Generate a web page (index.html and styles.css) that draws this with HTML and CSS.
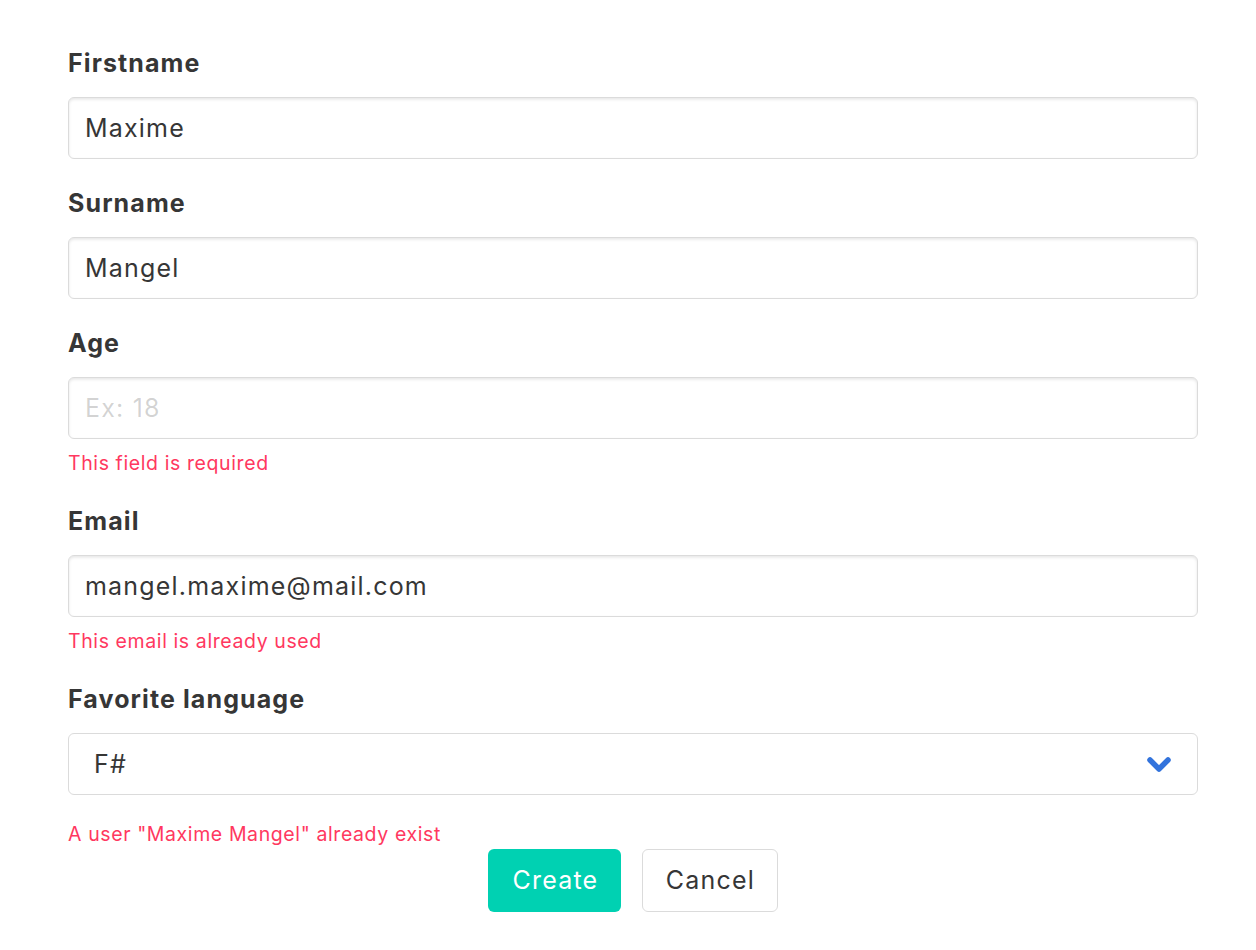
FILE: index.html
```html
<!DOCTYPE html>
<html lang="en">
<head>
<meta charset="utf-8">
<title>User form</title>
<link rel="stylesheet" href="styles.css">
</head>
<body>
<form class="form">
  <div class="field">
    <label class="label">Firstname</label>
    <div class="control"><input class="input" type="text" value="Maxime"></div>
  </div>
  <div class="field">
    <label class="label">Surname</label>
    <div class="control"><input class="input" type="text" value="Mangel"></div>
  </div>
  <div class="field">
    <label class="label">Age</label>
    <div class="control"><input class="input" type="text" placeholder="Ex: 18"></div>
    <p class="help">This field is required</p>
  </div>
  <div class="field">
    <label class="label">Email</label>
    <div class="control"><input class="input" type="text" value="mangel.maxime@mail.com"></div>
    <p class="help">This email is already used</p>
  </div>
  <div class="field field-last">
    <label class="label">Favorite language</label>
    <div class="control">
      <div class="select">
        <span class="select-value">F#</span>
        <svg class="arrow" width="26" height="18" viewBox="0 0 26 18"><polyline points="3,4 12,13 21,4" fill="none" stroke="#3273dc" stroke-width="5.5" stroke-linecap="round" stroke-linejoin="round"/></svg>
      </div>
    </div>
    <p class="help help-last">A user "Maxime Mangel" already exist</p>
  </div>
  <div class="buttons">
    <button type="button" class="button primary">Create</button>
    <button type="button" class="button">Cancel</button>
  </div>
</form>
</body>
</html>
```

FILE: styles.css
```css
html, body {
  margin: 0;
  padding: 0;
  background: #ffffff;
}
body {
  font-family: Inter, "Noto Sans", "Liberation Sans", sans-serif;
  color: #363636;
}
.form {
  width: 1130px;
  margin-left: 68px;
  padding-top: 45px;
}
.field {
  margin-bottom: 26px;
}
.label {
  display: block;
  font-size: 25px;
  font-weight: 700;
  line-height: 36px;
  letter-spacing: 1.1px;
  color: #363636;
  margin-bottom: 16px;
}
.input, .select {
  box-sizing: border-box;
  width: 100%;
  height: 62px;
  border: 1.5px solid #dbdbdb;
  border-radius: 6px;
  box-shadow: inset 0 1.5px 3px rgba(10, 10, 10, 0.1);
  background: #fff;
  font-family: inherit;
  font-size: 25px;
  letter-spacing: 1.2px;
  color: #363636;
  padding: 0 16px;
  outline: none;
}
.input::placeholder {
  color: rgba(54, 54, 54, 0.22);
}
.select {
  display: flex;
  align-items: center;
  justify-content: space-between;
  box-shadow: none;
  padding: 0 24px 0 25px;
}
.select-value {
  font-size: 25px;
}
.arrow {
  display: block;
  margin-top: 1px;
}
.help {
  margin: 11px 0 0;
  font-size: 19.5px;
  line-height: 27px;
  letter-spacing: 0.6px;
  color: #ff3860;
}
.help-last {
  margin-top: 26px;
}
.field-last {
  margin-bottom: 1px;
}
.buttons {
  display: flex;
  justify-content: center;
  gap: 21px;
}
.button {
  box-sizing: border-box;
  height: 63px;
  padding: 0 21.5px 0 23px;
  border: 1.5px solid #dbdbdb;
  border-radius: 6px;
  background: #fff;
  color: #363636;
  font-family: inherit;
  font-size: 25px;
  letter-spacing: 1.2px;
  line-height: 1;
  cursor: pointer;
}
.button.primary {
  background: #00d1b2;
  border-color: transparent;
  color: #fff;
}
```
